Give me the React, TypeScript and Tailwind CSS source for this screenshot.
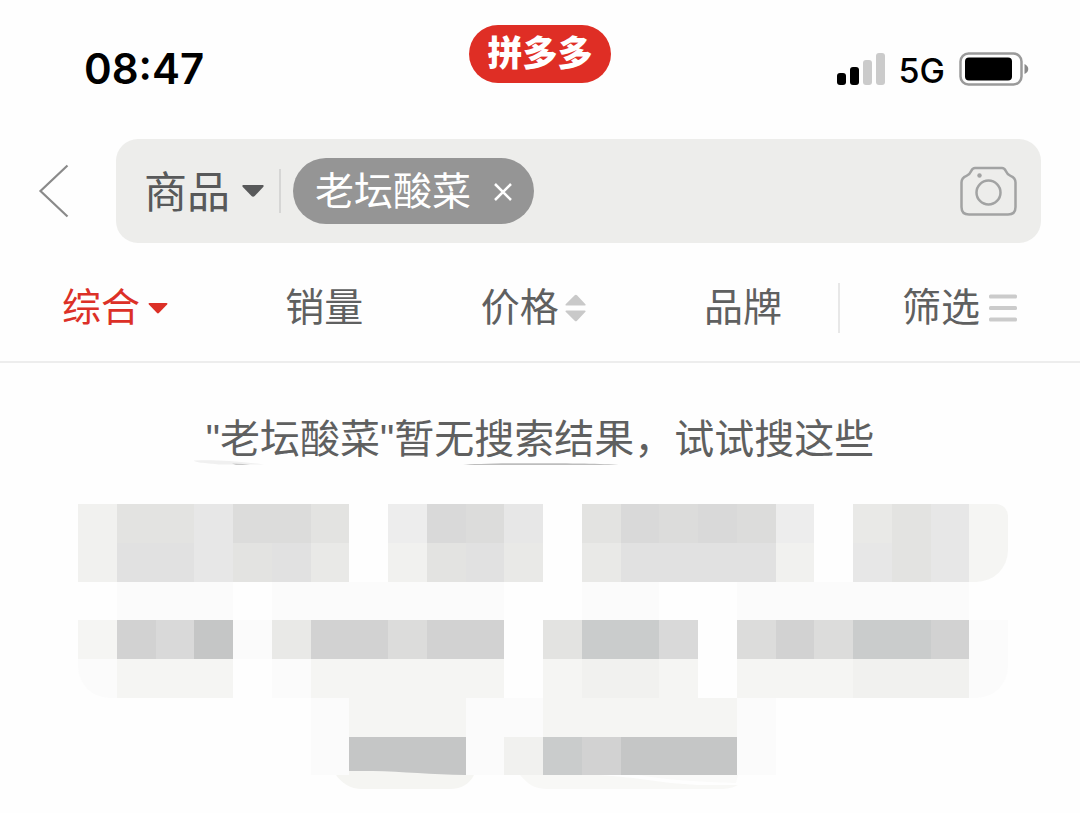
import { useState } from 'react';

// Cell shades of the blurred suggestion block, one letter per shade
const SHADES: Record<string, string> = {
  '.': 'bg-transparent',
  a: 'bg-[#fbfbfb]',
  b: 'bg-[#f5f5f3]',
  c: 'bg-[#f1f1ef]',
  d: 'bg-[#ededed]',
  e: 'bg-[#e9e9e7]',
  f: 'bg-[#e7e7e7]',
  g: 'bg-[#e3e3e1]',
  h: 'bg-[#e1e1e1]',
  i: 'bg-[#dcdcdb]',
  j: 'bg-[#d9d9d9]',
  k: 'bg-[#d2d2d2]',
  l: 'bg-[#cacccc]',
  m: 'bg-[#c5c6c6]',
  // rounded ends of the pills
  r: 'bg-[#f5f5f3] rounded-tr-xl',
  s: 'bg-[#f5f5f3] rounded-br-[32px]',
  t: 'bg-[#fbfbfb] rounded-br-[32px]',
  u: 'bg-[#fbfbfb] rounded-bl-[32px]',
};

const MOSAIC = [
  'cggfiig.djif.gjijid.egfr',
  'chhfghe.cghe.ehhhhc.fgfs',
  '.aaa.aaaaaa..aa..aaaaaa.',
  'bkjmaekkikk.gllj.ikillka',
  'ubbb.abbbbb.bccb.bbbccct',
  '......abbbaabbbbba......',
  '......ammmaclkmmma......',
];

const TABS = [
  { id: 'default', label: '综合' },
  { id: 'sales', label: '销量' },
  { id: 'price', label: '价格' },
  { id: 'brand', label: '品牌' },
];

function StatusBar() {
  return (
    <div className="grid grid-cols-[1fr_auto_1fr] items-end px-[51px] pt-[25px] text-black">
      <span className="pl-[33px] font-['Inter',sans-serif] text-[42px] leading-7 font-semibold">08:47</span>
      <span className="flex h-[58px] items-center rounded-full bg-[#df2e25] px-[18px] text-[35px] leading-[54px] font-black text-white">
        拼多多
      </span>
      <div className="flex h-7 items-center justify-end">
        <svg className="h-8 w-12" viewBox="0 0 48 32" aria-hidden="true">
          <rect x="0" y="20" width="9" height="12" rx="3" fill="#000" />
          <rect x="13" y="14" width="9" height="18" rx="3" fill="#000" />
          <rect x="26" y="7" width="9" height="25" rx="3" fill="#cbcbcb" />
          <rect x="39" y="0" width="9" height="32" rx="3" fill="#cbcbcb" />
        </svg>
        <span className="ml-3.5 pt-1 font-['Inter',sans-serif] text-[34px] leading-7 font-medium">5G</span>
        <svg className="ml-3.5 h-[34px] w-[70px]" viewBox="0 0 70 34" aria-hidden="true">
          <rect x="1.5" y="1.5" width="61" height="31" rx="8" fill="none" stroke="#9a9a9a" strokeWidth="2.5" />
          <rect x="6" y="5.5" width="47" height="23" rx="4" fill="#000" />
          <path d="M65.5 12c5 2 5 8 0 10z" fill="#8a8a8a" />
        </svg>
      </div>
    </div>
  );
}

function SearchBar() {
  const [scope, setScope] = useState('goods');
  const [keyword, setKeyword] = useState('老坛酸菜');
  const [query, setQuery] = useState('');

  return (
    <div className="mt-14 flex items-center gap-11 pr-[39px] pl-9">
      <button type="button" aria-label="返回" className="w-9 shrink-0">
        <svg className="h-[54px] w-9" viewBox="0 0 36 54" fill="none" stroke="#8a8a8a" strokeWidth="2.2">
          <path d="M31.5 1.5L4.5 27l27 25.5" />
        </svg>
      </button>
      <form
        onSubmit={(e) => e.preventDefault()}
        className="flex h-[104px] min-w-0 flex-1 items-center rounded-[22px] bg-[#ededeb] pr-6 pl-7"
      >
        <select
          aria-label="搜索范围"
          value={scope}
          onChange={(e) => setScope(e.target.value)}
          className="w-[86px] appearance-none bg-transparent pt-1 text-[43px] leading-[60px] text-[#58595a] outline-none"
        >
          <option value="goods">商品</option>
          <option value="shop">店铺</option>
        </select>
        <svg className="ml-3 h-3 w-[22px] shrink-0" viewBox="0 0 22 12" aria-hidden="true">
          <path d="M1.5 0h19c1.2 0 1.5 1 .7 1.900l-8.500 9c-1 1-2.200 1-3.200 0l-8.700-9C0 1 .3 0 1.500 0z" fill="#58595a" />
        </svg>
        <span className="ml-[15px] h-11 w-[2px] shrink-0 bg-[#d6d6d5]" />
        {keyword && (
          <span className="ml-3 flex h-[66px] shrink-0 items-center rounded-full bg-[#959595] pt-0.5 pr-[21px] pl-[22px] text-[39px] leading-[64px] text-white">
            {keyword}
            <button type="button" aria-label="清除" onClick={() => setKeyword('')} className="ml-[22px]">
              <svg className="size-5" viewBox="0 0 20 20" fill="none" stroke="#fff" strokeWidth="2.5">
                <path d="M2 2l16 16M18 2L2 18" />
              </svg>
            </button>
          </span>
        )}
        <input
          aria-label="搜索"
          value={query}
          onChange={(e) => setQuery(e.target.value)}
          className="h-16 min-w-0 flex-1 bg-transparent px-4 text-[39px] text-[#58595a] outline-none"
        />
        <button type="button" aria-label="拍照搜索">
          <svg className="h-[50px] w-[57px]" viewBox="0 0 57 50" fill="none" stroke="#a2a3a3" strokeWidth="2.5">
            <path d="M15 2h27c2 0 2.800.8 3.800 3 1.200 2.800 2 3.800 4.700 4.800 3.500 1.300 5 3 5 6.700V41c0 5-2.500 7.500-7.500 7.500H9c-5 0-7.500-2.500-7.500-7.500V16.500c0-3.700 1.500-5.400 5-6.700 2.700-1 3.500-2 4.700-4.800 1-2.200 1.800-3 3.800-3z" />
            <circle cx="28.5" cy="26.5" r="12" />
            <circle cx="19.5" cy="9.5" r="2.2" fill="#a2a3a3" stroke="none" />
          </svg>
        </button>
      </form>
    </div>
  );
}

function SortTabs() {
  const [active, setActive] = useState('default');

  return (
    <nav className="flex h-[120px] items-center border-b-2 border-[#ededed] pt-3 pr-[63px] pl-[62px] text-[39px] leading-[56px] text-[#5f6060]">
      <div className="flex flex-1 items-center justify-between">
        {TABS.map((tab) => (
          <button
            key={tab.id}
            type="button"
            onClick={() => setActive(tab.id)}
            className={`flex items-center ${active === tab.id ? 'text-[#dc3027]' : ''}`}
          >
            {tab.label}
            {tab.id === 'default' && (
              <svg className="ml-2 h-3 w-5" viewBox="0 0 20 12" fill="currentColor" aria-hidden="true">
                <path d="M1.5 1h17c1 0 1.300.8.600 1.600l-8 8.200c-.8.800-1.500.8-2.300 0L.9 2.600C.2 1.800.5 1 1.500 1z" />
              </svg>
            )}
            {tab.id === 'price' && (
              <svg className="ml-1.5 h-[30px] w-[22px]" viewBox="0 0 22 30" fill="#c9c9c9" aria-hidden="true">
                <path d="M1.5 12.500h18c1.200 0 1.500-.8.700-1.600L12 2.300c-.8-.8-1.500-.8-2.300 0L.9 10.900c-.8.800-.5 1.600.6 1.600z" />
                <path d="M1.5 17.500h18c1.200 0 1.500.8.700 1.600L12 27.700c-.8.800-1.500.8-2.300 0L.9 19.100c-.8-.8-.5-1.600.6-1.600z" />
              </svg>
            )}
          </button>
        ))}
      </div>
      <span className="ml-14 h-[50px] w-[2px] bg-[#e8e8e8]" />
      <button type="button" className="ml-[62px] flex items-center">
        筛选
        <svg className="ml-[9px] h-7 w-7" viewBox="0 0 28 28" fill="#cbcbcb" aria-hidden="true">
          <rect width="28" height="4" y="0.5" rx="1.5" />
          <rect width="28" height="4" y="12" rx="1.5" />
          <rect width="28" height="4" y="23.5" rx="1.5" />
        </svg>
      </button>
    </nav>
  );
}

function Suggestions() {
  return (
    <div className="pr-[72px] pl-[78px]" aria-hidden="true">
      {/* upper edges of the erased tags */}
      <svg className="block h-[41px] w-full overflow-visible" viewBox="0 0 930 41" preserveAspectRatio="none">
        <path d="M116-2.500c18-1 38 0 70 4h-45c-10-1-25-2-25-4z" fill="#f0f0f0" />
        <path d="M154 .5c8 0 14 1 18 1.500h-14z" fill="#c8c8c8" />
        <path d="M385 2c20-2.500 135-2.500 158 0z" fill="#bdbdbd" />
      </svg>
      {MOSAIC.map((row, y) => (
        <div key={y} className="grid grid-cols-24">
          {row.split('').map((shade, x) => (
            <span key={x} className={`aspect-square ${SHADES[shade]}`} />
          ))}
        </div>
      ))}
      {/* lower edges of the last two tags */}
      <svg className="relative -mt-1 block h-5 w-full" viewBox="0 0 930 20" preserveAspectRatio="none">
        <path d="M258 4c6 8 14 14 26 14h88c12 0 20-6 24-14h-13z" fill="#f5f5f2" />
        <path d="M271 0C310-1 345 3.500 387 4H271z" fill="#f5f5f2" />
        <path d="M442 4c8 9 14 14 28 14h170c12 0 16-2 20-4H620C580 12 560 6 520 4z" fill="#f8f8f6" />
        <path d="M560 4c30 5 60 7 98 8l2-8z" fill="#fafaf9" />
      </svg>
    </div>
  );
}

export default function App() {
  return (
    <div className="min-h-screen bg-[#fefefe] font-['Liberation_Sans','Noto_Sans_CJK_SC',sans-serif]" lang="zh-CN">
      <StatusBar />
      <SearchBar />
      <SortTabs />
      <p className="pt-[52px] text-center text-[40px] leading-[48px] text-[#5f6060]">
        "老坛酸菜"暂无搜索结果，试试搜这些
      </p>
      <Suggestions />
    </div>
  );
}
